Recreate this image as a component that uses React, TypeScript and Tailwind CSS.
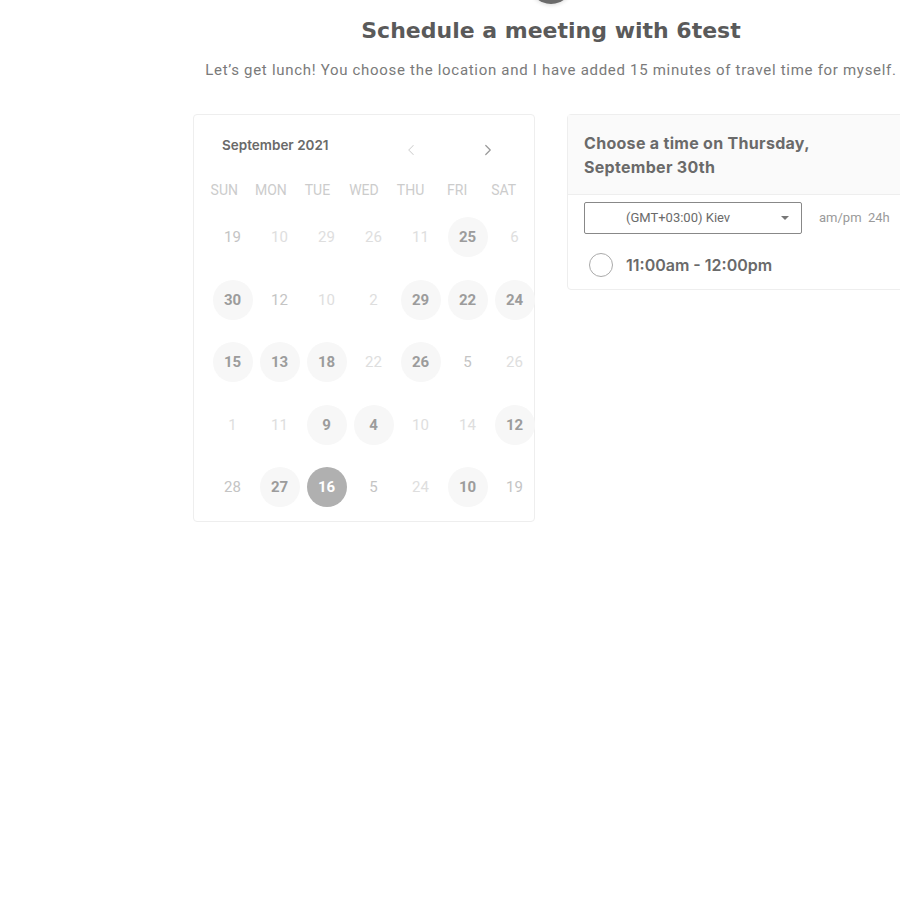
import React from "react";
import { ChevronLeft, ChevronRight } from "lucide-react";

type Day = { n: number; kind: "open" | "off" | "dim" | "selected" };

// calendar grid, as shown in the picture (not a real month)
const weeks: Day[][] = [
  [
    { n: 19, kind: "dim" },
    { n: 10, kind: "off" },
    { n: 29, kind: "off" },
    { n: 26, kind: "off" },
    { n: 11, kind: "off" },
    { n: 25, kind: "open" },
    { n: 6, kind: "off" },
  ],
  [
    { n: 30, kind: "open" },
    { n: 12, kind: "dim" },
    { n: 10, kind: "off" },
    { n: 2, kind: "off" },
    { n: 29, kind: "open" },
    { n: 22, kind: "open" },
    { n: 24, kind: "open" },
  ],
  [
    { n: 15, kind: "open" },
    { n: 13, kind: "open" },
    { n: 18, kind: "open" },
    { n: 22, kind: "off" },
    { n: 26, kind: "open" },
    { n: 5, kind: "dim" },
    { n: 26, kind: "off" },
  ],
  [
    { n: 1, kind: "off" },
    { n: 11, kind: "off" },
    { n: 9, kind: "open" },
    { n: 4, kind: "open" },
    { n: 10, kind: "off" },
    { n: 14, kind: "off" },
    { n: 12, kind: "open" },
  ],
  [
    { n: 28, kind: "dim" },
    { n: 27, kind: "open" },
    { n: 16, kind: "selected" },
    { n: 5, kind: "dim" },
    { n: 24, kind: "off" },
    { n: 10, kind: "open" },
    { n: 19, kind: "dim" },
  ],
];

const weekdays = ["Sun", "Mon", "Tue", "Wed", "Thu", "Fri", "Sat"];

const dayClass = (kind: Day["kind"]) => {
  if (kind === "selected") return "bg-[#b0b0b0] text-white font-bold";
  if (kind === "open") return "bg-[#f7f7f7] text-[#9c9c9c] font-bold";
  if (kind === "dim") return "text-[#c4c4c4]";
  return "text-[#dedede]";
};

const Calendar = () => (
  <div className="w-[342px] shrink-0 rounded-sm border border-[#eeeeee] pb-[2px]">
    {/* Month + arrows */}
    <div className="mt-[20px] flex h-[20px] items-center pl-[28px]">
      <span className="w-[180px] font-['Inter',sans-serif] text-[13.5px] font-semibold text-[#6a6a6a]">
        September 2021
      </span>
      <span className="mt-[10px] flex w-[18px] justify-center text-[#d2d2d2]">
        <ChevronLeft size={24} strokeWidth={1.4} />
      </span>
      <span className="ml-[59px] mt-[10px] flex w-[18px] justify-center text-[#999999]">
        <ChevronRight size={24} strokeWidth={1.6} />
      </span>
    </div>

    {/* Weekday names */}
    <div className="ml-[7px] mt-[25px] grid h-[20px] w-[326px] grid-cols-7 items-center font-['Roboto',sans-serif] text-[14px] uppercase text-[#cccccc]">
      {weekdays.map((d) => (
        <span key={d} className="text-center">
          {d}
        </span>
      ))}
    </div>

    {/* Dates */}
    <div className="ml-[15px] mt-[6px] w-[329px] font-['Roboto',sans-serif] text-[15px]">
      {weeks.map((week, i) => (
        <div key={i} className="grid h-[62.5px] grid-cols-7 items-center">
          {week.map((day, j) => (
            <div key={j} className="flex justify-center">
              <span
                className={`flex h-10 w-10 items-center justify-center rounded-full ${dayClass(day.kind)}`}
              >
                {day.n}
              </span>
            </div>
          ))}
        </div>
      ))}
    </div>
  </div>
);

const TimePanel = () => (
  <div className="w-[342px] shrink-0 rounded-sm border border-[#eeeeee] pb-[12px]">
    <div className="border-b border-[#eeeeee] bg-[#fafafa] px-4 pb-[15px] pt-[16px] font-['Inter',sans-serif] text-[16px] font-bold leading-6 tracking-[0.3px] text-[#6a6a6a]">
      Choose a time on Thursday,
      <br />
      September 30th
    </div>

    <div className="mt-[7px] flex items-center px-4">
      <div className="flex h-[32px] w-[218px] items-center rounded-[2px] border border-[#888888] pl-[41px] pr-[12px] font-['Roboto',sans-serif] text-[13px] text-[#6a6a6a]">
        <span>(GMT+03:00) Kiev</span>
        <svg className="ml-auto" width="8" height="4" viewBox="0 0 8 4">
          <path d="M0 0h8L4 4z" fill="#777" />
        </svg>
      </div>
      <span className="ml-[17px] font-['Roboto',sans-serif] text-[13px] text-[#9a9a9a]">
        am/pm&nbsp;&nbsp;24h
      </span>
    </div>

    <div className="ml-[21px] mt-[19px] flex items-center gap-[13px]">
      <span className="h-6 w-6 rounded-full border border-[#aaaaaa]" />
      <span className="font-['Inter',sans-serif] text-[16px] font-semibold text-[#6a6a6a]">
        11:00am - 12:00pm
      </span>
    </div>
  </div>
);

export default function App() {
  return (
    <div className="h-[900px] w-[900px] overflow-hidden bg-white">
      <div className="ml-[193px] flex w-[716px] flex-col items-center">
        {/* avatar, scrolled mostly out of view */}
        <div className="-mt-[40px] h-[44px] w-[44px] rounded-full bg-[#6b6b6b] shadow-[0_1px_4px_rgba(0,0,0,0.15)]" />

        <h1 className="mt-[13px] whitespace-nowrap font-['DejaVu_Sans',sans-serif] text-[22px] font-bold leading-[28px] text-[#5a5a5a]">
          Schedule a meeting with 6test
        </h1>
        <p className="mt-[15px] whitespace-nowrap font-['Roboto',sans-serif] text-[15px] leading-5 tracking-[0.7px] text-[#7a7a7a]">
          Let’s get lunch! You choose the location and I have added 15 minutes of travel time for myself.
        </p>

        <div className="mt-[34px] flex w-full items-start gap-8">
          <Calendar />
          <TimePanel />
        </div>
      </div>
    </div>
  );
}
